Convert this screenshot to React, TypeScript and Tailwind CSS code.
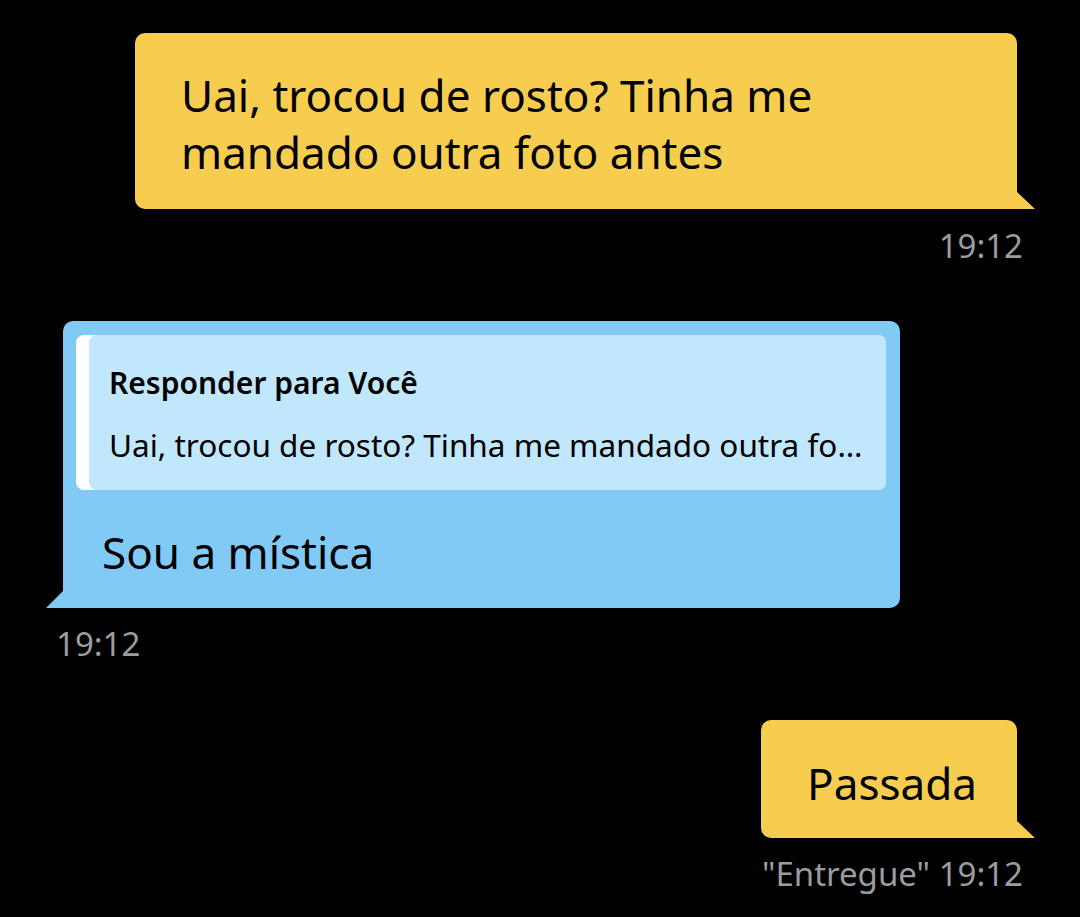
import React from "react";

const font = { fontFamily: '"Noto Sans", "Open Sans", sans-serif' };

function TailRight({ color }: { color: string }) {
  return (
    <svg className="absolute bottom-0 right-[-18px]" width="18" height="17" viewBox="0 0 18 17">
      <polygon points="0,0 18,17 0,17" fill={color} />
    </svg>
  );
}

function TailLeft({ color }: { color: string }) {
  return (
    <svg className="absolute bottom-0 left-[-17px]" width="17" height="17" viewBox="0 0 17 17">
      <polygon points="17,0 17,17 0,17" fill={color} />
    </svg>
  );
}

export default function App() {
  return (
    <div className="flex min-h-[917px] w-[1080px] flex-col bg-black pt-[33px]" style={font}>
      {/* sent: long message */}
      <div className="flex justify-end pr-[63px]">
        <div className="relative w-[882px] rounded-[10px] rounded-br-none bg-[#f6cd4f] pb-[28px] pl-[46px] pr-[40px] pt-[34px] text-[44px] leading-[57px] text-black">
          Uai, trocou de rosto? Tinha me
          <br />
          mandado outra foto antes
          <TailRight color="#f6cd4f" />
        </div>
      </div>
      <div className="mt-[17px] pr-[57px] text-right text-[33px] leading-[40px] text-[#9c9ca0]">19:12</div>

      {/* received: reply */}
      <div className="mt-[55px] flex pl-[63px]">
        <div className="relative w-[837px] rounded-[10px] rounded-bl-none bg-[#81caf5] pb-[31px] pl-[13px] pr-[14px] pt-[14px]">
          <div className="rounded-[8px] bg-white pl-[13px]">
            <div className="rounded-[8px] bg-[#c1e7fc] pb-[26px] pl-[20px] pr-[20px] pt-[30px]">
              <div className="text-[30px] font-semibold leading-[36px] text-black">Responder para Você</div>
              <div className="mt-[25px] whitespace-nowrap text-[31.5px] leading-[38px] text-black">
                Uai, trocou de rosto? Tinha me mandado outra fo…
              </div>
            </div>
          </div>
          <div className="mt-[37px] pl-[26px] text-[44px] leading-[50px] text-black">Sou a mística</div>
          <TailLeft color="#81caf5" />
        </div>
      </div>
      <div className="mt-[16px] pl-[56px] text-[33px] leading-[40px] text-[#9c9ca0]">19:12</div>

      {/* sent: short */}
      <div className="mt-[56px] flex justify-end pr-[63px]">
        <div className="relative rounded-[10px] rounded-br-none bg-[#f6cd4f] pb-[30px] pl-[46px] pr-[40px] pt-[38px] text-[44px] leading-[50px] text-black">
          Passada
          <TailRight color="#f6cd4f" />
        </div>
      </div>
      <div className="mt-[16px] pr-[57px] text-right text-[33px] leading-[40px] text-[#9c9ca0]">"Entregue" 19:12</div>
    </div>
  );
}
